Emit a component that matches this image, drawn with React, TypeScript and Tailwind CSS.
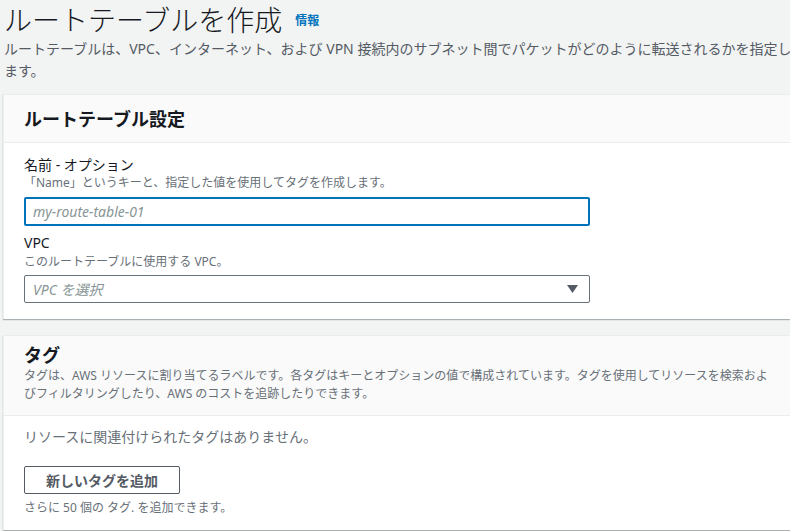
export default function App() {
  const font = { fontFamily: '"Noto Sans", "Noto Sans CJK JP", sans-serif' };

  return (
    <div className="w-[790px] h-[531px] overflow-hidden bg-[#f2f3f3] text-[#16191f]" style={font}>
      <div className="w-[800px] pl-[3px]">
        {/* Page header */}
        <div className="flex items-end gap-[13px] pl-[1px] h-[38px]">
          <h1 className="text-[28px] leading-[36px] font-light text-[#16191f]">
            ルートテーブルを作成
          </h1>
          <a className="text-[12px] font-bold text-[#0073bb] mb-[8px]">情報</a>
        </div>
        <p className="pl-[1px] text-[14px] leading-[22px] text-[#545b64]">
          ルートテーブルは、VPC、インターネット、および VPN 接続内のサブネット間でパケットがどのように転送されるかを指定します。
        </p>

        {/* Route table settings */}
        <div className="mt-[12px] bg-white border-l border-t border-[#eaeded] shadow-[0_1px_1px_0_rgba(0,28,36,0.3)]">
          <div className="h-[48px] flex items-center px-[20px] bg-[#fafafa] border-b border-[#eaeded]">
            <h2 className="text-[18px] font-bold leading-[24px]">ルートテーブル設定</h2>
          </div>
          <div className="px-[20px] pt-[12px] pb-[16px] w-[606px]">
            <div className="text-[14px] leading-[20px] font-normal">名前 - オプション</div>
            <div className="text-[12px] leading-[16px] text-[#687078]">「Name」というキーと、指定した値を使用してタグを作成します。</div>
            <div className="mt-[6px] h-[29px] border-2 border-[#0073bb] rounded-[2px] flex items-center px-[7px]">
              <span className="italic text-[14px] text-[#879596]">my-route-table-01</span>
            </div>
            <div className="mt-[6px] text-[14px] leading-[22px] font-normal">VPC</div>
            <div className="text-[12px] leading-[16px] text-[#687078]">このルートテーブルに使用する VPC。</div>
            <div className="mt-[5px] h-[28px] border border-[#687078] rounded-[2px] flex items-center justify-between pl-[8px] pr-[11px]">
              <span className="italic text-[14px] text-[#879596]">VPC を選択</span>
              <svg width="11" height="8" viewBox="0 0 11 8">
                <path d="M0 0 L11 0 L5.5 8 Z" fill="#545b64" />
              </svg>
            </div>
          </div>
        </div>

        {/* Tags */}
        <div className="mt-[16px] bg-white border-l border-t border-[#eaeded] shadow-[0_1px_1px_0_rgba(0,28,36,0.3)]">
          <div className="px-[20px] pt-[7px] pb-[12px] bg-[#fafafa] border-b border-[#eaeded]">
            <h2 className="text-[18px] font-bold leading-[24px]">タグ</h2>
            <p className="text-[12px] leading-[18px] text-[#687078] pr-[12px]">
              タグは、AWS リソースに割り当てるラベルです。各タグはキーとオプションの値で構成されています。タグを使用してリソースを検索およびフィルタリングしたり、AWS のコストを追跡したりできます。
            </p>
          </div>
          <div className="px-[20px] pt-[11px] pb-[14px]">
            <div className="text-[14px] leading-[20px] text-[#687078]">リソースに関連付けられたタグはありません。</div>
            <button className="mt-[19px] h-[28px] w-[156px] border border-[#545b64] rounded-[2px] bg-white text-[14px] font-bold text-[#545b64]">
              新しいタグを追加
            </button>
            <div className="mt-[6px] text-[12px] leading-[16px] text-[#687078]">さらに 50 個の タグ. を追加できます。</div>
          </div>
        </div>
      </div>
    </div>
  );
}
